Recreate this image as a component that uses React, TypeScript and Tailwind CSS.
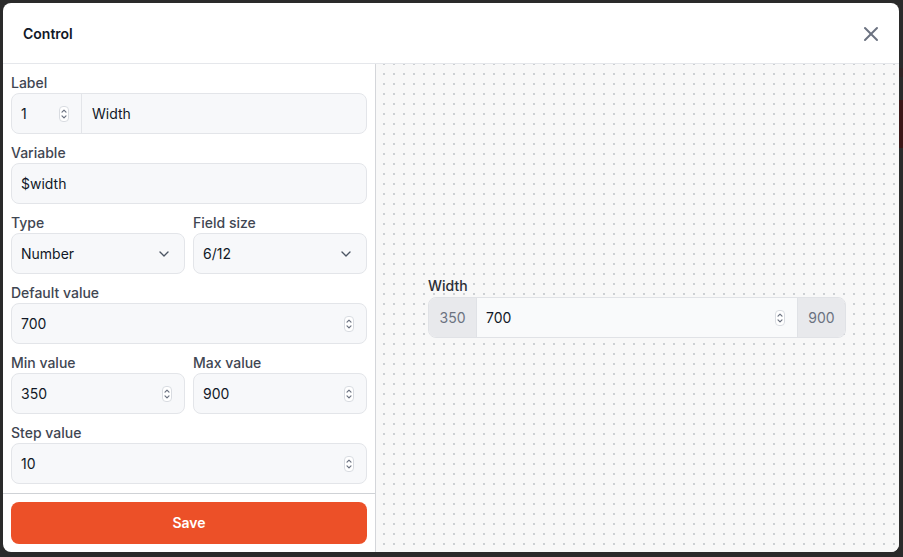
import { ChevronDown, X } from "lucide-react";

const Spinner = () => (
  <svg width="10" height="16" viewBox="0 0 10 16" className="shrink-0">
    <rect x="0.5" y="0.5" width="9" height="15" rx="3.5" fill="#ffffff" stroke="#d9dce1" />
    <path d="M3 6.2 L5 4.2 L7 6.2" fill="none" stroke="#6b7280" strokeWidth="1.2" strokeLinecap="round" strokeLinejoin="round" />
    <path d="M3 9.8 L5 11.8 L7 9.8" fill="none" stroke="#6b7280" strokeWidth="1.2" strokeLinecap="round" strokeLinejoin="round" />
  </svg>
);

const FieldLabel = ({ children }: { children: string }) => (
  <label className="block text-sm leading-5 font-medium text-[#3f4652]">{children}</label>
);

const NumberBox = ({ value }: { value: string }) => (
  <div className="h-[41px] flex items-center justify-between bg-[#f7f8fa] border border-[#e3e5e9] rounded-lg pl-[9px] pr-3 text-sm text-[#111827]">
    <span>{value}</span>
    <Spinner />
  </div>
);

const SelectBox = ({ value }: { value: string }) => (
  <div className="h-[41px] flex items-center justify-between bg-[#f7f8fa] border border-[#e3e5e9] rounded-lg pl-[9px] pr-3 text-sm text-[#111827]">
    <span>{value}</span>
    <ChevronDown size={16} strokeWidth={2} className="text-[#4b5563]" />
  </div>
);

export default function App() {
  return (
    <div className="relative w-[903px] h-[557px] bg-[#2a2a2a] pt-[3px] pl-[3px] pr-[4px] pb-[5px] overflow-hidden font-['Inter','Liberation_Sans',sans-serif]">
      {/* page behind the overlay */}
      <div className="absolute right-0 top-[100px] w-[4px] h-[48px] bg-[#3b1616]" />
      <div className="absolute right-0 top-[68px] w-[4px] h-[9px] bg-[#302424]" />

      <div className="relative h-full bg-white rounded-lg flex flex-col overflow-hidden">
        {/* Header */}
        <div className="h-[61px] shrink-0 border-b border-[#e5e7eb] flex items-center justify-between pl-5 pr-4 pt-px">
          <h2 className="text-sm font-semibold text-[#111827]">Control</h2>
          <X size={24} strokeWidth={2} className="text-[#6b7280]" />
        </div>

        <div className="flex flex-1 min-h-0">
          {/* Form */}
          <div className="w-[373px] shrink-0 border-r border-[#d4d6da] flex flex-col">
            <div className="flex-1 px-2 pt-[9px] flex flex-col gap-[9px]">
              <section>
                <FieldLabel>Label</FieldLabel>
                <div className="h-[41px] flex bg-[#f7f8fa] border border-[#e3e5e9] rounded-lg text-sm text-[#111827]">
                  <div className="w-[70px] flex items-center justify-between pl-[9px] pr-3 border-r border-[#e3e5e9]">
                    <span>1</span>
                    <Spinner />
                  </div>
                  <div className="flex items-center pl-[10px]">Width</div>
                </div>
              </section>
              <section>
                <FieldLabel>Variable</FieldLabel>
                <div className="h-[41px] flex items-center bg-[#f7f8fa] border border-[#e3e5e9] rounded-lg pl-[9px] text-sm text-[#111827]">
                  $width
                </div>
              </section>
              <section className="grid grid-cols-2 gap-2">
                <div>
                  <FieldLabel>Type</FieldLabel>
                  <SelectBox value="Number" />
                </div>
                <div>
                  <FieldLabel>Field size</FieldLabel>
                  <SelectBox value="6/12" />
                </div>
              </section>
              <section>
                <FieldLabel>Default value</FieldLabel>
                <NumberBox value="700" />
              </section>
              <section className="grid grid-cols-2 gap-2">
                <div>
                  <FieldLabel>Min value</FieldLabel>
                  <NumberBox value="350" />
                </div>
                <div>
                  <FieldLabel>Max value</FieldLabel>
                  <NumberBox value="900" />
                </div>
              </section>
              <section>
                <FieldLabel>Step value</FieldLabel>
                <NumberBox value="10" />
              </section>
            </div>
            <div className="shrink-0 border-t border-[#cfd2d6] px-2 pt-2 pb-2">
              <button
                type="button"
                className="w-full h-[42px] rounded-lg bg-[#ec5028] text-white text-sm font-semibold"
              >
                Save
              </button>
            </div>
          </div>

          {/* Preview */}
          <div className="flex-1 flex items-center justify-center bg-[#f8f8f8] bg-[radial-gradient(circle,#cdd0d3_0.9px,transparent_1.1px)] bg-size-[10px_10px] bg-position-[3px_5px]">
            <div className="w-[418px] -mt-[2px] -ml-px">
              <label className="block text-sm leading-5 font-medium text-[#2b2f36] mb-px">Width</label>
              <div className="h-[41px] flex border border-[#e0e2e6] rounded-lg overflow-hidden text-sm">
                <div className="w-[48px] flex items-center justify-center bg-[#e8e9ec] text-[#6b7280] border-r border-[#e0e2e6]">
                  350
                </div>
                <div className="flex-1 flex items-center justify-between bg-[#f9fafb] pl-[9px] pr-3 text-[#111827]">
                  <span>700</span>
                  <Spinner />
                </div>
                <div className="w-[48px] flex items-center justify-center bg-[#e8e9ec] text-[#6b7280] border-l border-[#e0e2e6]">
                  900
                </div>
              </div>
            </div>
          </div>
        </div>
      </div>
    </div>
  );
}
